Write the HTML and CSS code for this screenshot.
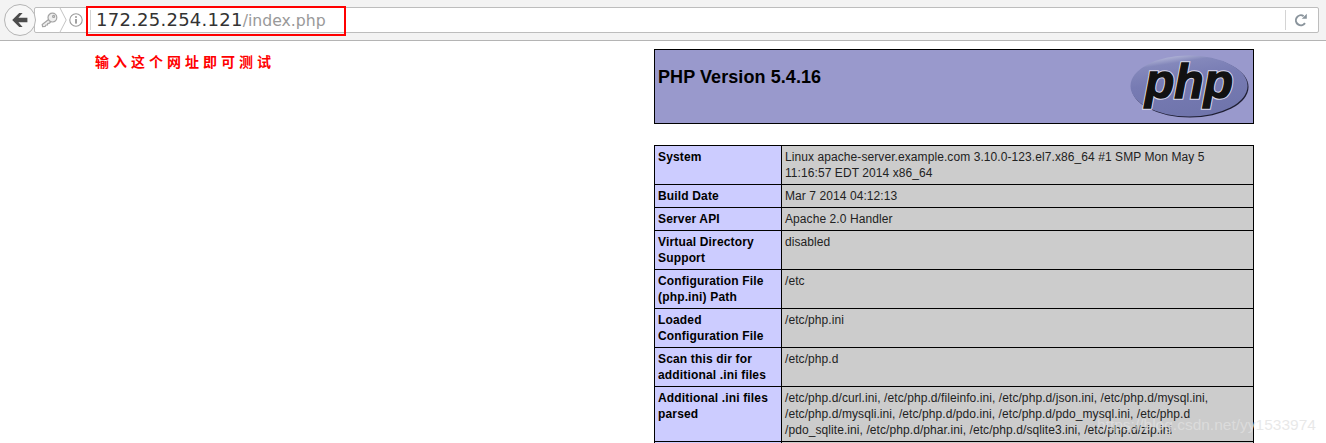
FILE: index.html
```html
<!DOCTYPE html>
<html lang="zh">
<head>
<meta charset="utf-8">
<title>phpinfo()</title>
<link rel="stylesheet" href="styles.css">
</head>
<body>
<header class="toolbar">
  <button class="back" aria-label="Back">
    <svg width="18" height="16" viewBox="0 0 18 16"><path d="M8.2 1 1.2 8l7 7h3.4L7.4 10.2H16.4V5.8H7.4L11.6 1z" fill="#4d4d4d"/></svg>
  </button>
  <div class="urlbar">
    <svg class="key" width="17" height="16" viewBox="0 0 17 16" fill="#eee" stroke="#a4a4a4" stroke-width="1.2"><path d="M7.6 7.6 1.2 12.4l.4 2.3 2.5-.2.9-1.5 1.5-.1.3-1.5 1.7-.3 1.3-1.6"/><circle cx="11.4" cy="5.6" r="4.4"/><circle cx="12.6" cy="4.4" r="1" fill="#fff"/></svg>
    <svg class="chev" width="8" height="26" viewBox="0 0 8 26" fill="none" stroke="#c4c4c4"><path d="M.5 0 7.2 13 .5 26"/></svg>
    <svg class="site-info" width="14" height="14" viewBox="0 0 14 14"><circle cx="7" cy="7" r="6.2" fill="none" stroke="#9c9c9c" stroke-width="1.1"/><rect x="6.2" y="6" width="1.6" height="4.6" fill="#8a8a8a"/><rect x="6.2" y="3.2" width="1.6" height="1.6" fill="#8a8a8a"/></svg>
    <span class="sep"></span>
    <span class="url"><span class="host">172.25.254.121</span><span class="path">/index.php</span></span>
    <span class="sep sep-end"></span>
    <svg class="reload" width="14" height="14" viewBox="0 0 14 14" fill="none"><path d="M11 10.2A5 5 0 1 1 9.6 3.1" stroke="#8a949c" stroke-width="2"/><path d="M7.8 5.8h5V.8z" fill="#8a949c"/></svg>
  </div>
</header>
<div class="url-mark"></div>

<main class="content">
  <p class="note">输入这个网址即可测试</p>
  <section class="phpinfo">
    <div class="banner">
      <h1>PHP Version 5.4.16</h1>
      <svg class="logo" width="120" height="63" viewBox="0 0 120 63">
        <defs>
          <linearGradient id="lg" x1="0.35" y1="0" x2="0.65" y2="1"><stop offset="0" stop-color="#b4b7d8"/><stop offset=".12" stop-color="#8488bb"/><stop offset=".4" stop-color="#777bb3"/><stop offset="1" stop-color="#6f74ab"/></linearGradient>
        </defs>
        <ellipse cx="60" cy="32" rx="58.5" ry="30.5" fill="#1e1e33"/>
        <ellipse cx="59" cy="31" rx="58.5" ry="30.5" fill="url(#lg)"/>
        <text x="15" y="43" textLength="88" lengthAdjust="spacingAndGlyphs" class="logo-text logo-halo">php</text>
        <text x="15" y="43" textLength="88" lengthAdjust="spacingAndGlyphs" class="logo-text">php</text>
      </svg>
    </div>
    <table class="sysinfo">
      <colgroup><col class="col-e"><col></colgroup>
      <tr><th>System</th><td>Linux apache-server.example.com 3.10.0-123.el7.x86_64 #1 SMP Mon May 5<br>11:16:57 EDT 2014 x86_64</td></tr>
      <tr><th>Build Date</th><td>Mar 7 2014 04:12:13</td></tr>
      <tr><th>Server API</th><td>Apache 2.0 Handler</td></tr>
      <tr><th>Virtual Directory<br>Support</th><td>disabled</td></tr>
      <tr><th>Configuration File<br>(php.ini) Path</th><td>/etc</td></tr>
      <tr><th>Loaded<br>Configuration File</th><td>/etc/php.ini</td></tr>
      <tr><th>Scan this dir for<br>additional .ini files</th><td>/etc/php.d</td></tr>
      <tr><th>Additional .ini files<br>parsed</th><td>/etc/php.d/curl.ini, /etc/php.d/fileinfo.ini, /etc/php.d/json.ini, /etc/php.d/mysql.ini,<br>/etc/php.d/mysqli.ini, /etc/php.d/pdo.ini, /etc/php.d/pdo_mysql.ini, /etc/php.d<br>/pdo_sqlite.ini, /etc/php.d/phar.ini, /etc/php.d/sqlite3.ini, /etc/php.d/zip.ini</td></tr>
      <tr><th>&nbsp;</th><td>&nbsp;</td></tr>
    </table>
  </section>
</main>
<div class="watermark">https://blog.csdn.net/yy1533974</div>
</body>
</html>
```

FILE: styles.css
```css
html, body {
  margin: 0;
  height: 443px;
  overflow: hidden;
  background: #fff;
  font-family: "Liberation Sans", Arial, sans-serif;
}

.toolbar {
  box-sizing: border-box;
  height: 41px;
  display: flex;
  align-items: center;
  padding: 0 7px 1px 4px;
  background: #f3f3f3;
  border-bottom: 1px solid #b4b4b4;
}

.back {
  box-sizing: border-box;
  flex: none;
  width: 32px;
  height: 32px;
  padding: 0;
  margin-right: -2px;
  position: relative;
  z-index: 1;
  display: flex;
  align-items: center;
  justify-content: center;
  border: 1px solid #b5b5b5;
  border-radius: 50%;
  background: #f7f7f7;
}

.urlbar {
  flex: 1;
  box-sizing: border-box;
  height: 26px;
  display: flex;
  align-items: center;
  background: #fff;
  border: 1px solid #bdbdbd;
  border-radius: 2px;
  padding-left: 6px;
}

.key { flex: none; }
.chev { flex: none; margin-left: 1px; }
.site-info { flex: none; margin-left: 2px; }

.sep {
  flex: none;
  width: 1px;
  height: 20px;
  margin-left: 7px;
  background: #d4d4d4;
}

.url {
  flex: 1;
  margin-left: 5px;
  padding-top: 1px;
  font-family: "DejaVu Sans", sans-serif;
  line-height: 24px;
  white-space: nowrap;
}

.host { color: #333; font-size: 18px; letter-spacing: .25px; }
.path { color: #999; font-size: 15.7px; }

.sep-end { margin: 0 8px 0 0; }
.reload { flex: none; margin-right: 10px; }

.url-mark {
  position: absolute;
  left: 86px;
  top: 6px;
  width: 256px;
  height: 26px;
  border: 2px solid #f00;
}

.content {
  display: flex;
  align-items: flex-start;
  justify-content: space-between;
  padding: 8px 72px 0 95px;
}

.note {
  margin: 3px 0 0;
  color: #f00;
  font-family: "Noto Sans CJK SC", sans-serif;
  font-size: 14px;
  font-weight: 700;
  line-height: 18px;
  letter-spacing: 4px;
}

.phpinfo { width: 600px; flex: none; }

.banner {
  box-sizing: border-box;
  height: 75px;
  display: flex;
  align-items: flex-start;
  justify-content: space-between;
  padding: 5px 3px 0 3px;
  background: #9999cc;
  border: 1px solid #000;
}

.banner h1 {
  margin: 11px 0 0;
  font-size: 18px;
  line-height: 22px;
  font-weight: 700;
  letter-spacing: .08px;
  color: #000;
}

.logo-text {
  font-family: "Liberation Sans", sans-serif;
  font-size: 48px;
  font-weight: 700;
  font-style: italic;
  fill: #111;
  stroke: #111;
  stroke-width: 1.4px;
}

.logo-text.logo-halo {
  stroke: #d8d8e8;
  stroke-width: 3.4px;
}

.sysinfo {
  width: 600px;
  margin-top: 21px;
  table-layout: fixed;
  border-collapse: collapse;
  font-size: 12px;
  line-height: 16px;
  letter-spacing: .08px;
  color: #222;
}

.col-e { width: 127px; }

.sysinfo th, .sysinfo td {
  border: 1px solid #000;
  padding: 3px;
  vertical-align: top;
  text-align: left;
  white-space: nowrap;
}

.sysinfo th { background: #ccccff; font-weight: 700; color: #000; letter-spacing: .16px; }
.sysinfo td { background: #cccccc; }

.watermark {
  position: absolute;
  left: 1097px;
  top: 416px;
  font-size: 15.5px;
  line-height: 18px;
  color: rgba(225, 225, 225, .75);
  white-space: nowrap;
}
```
